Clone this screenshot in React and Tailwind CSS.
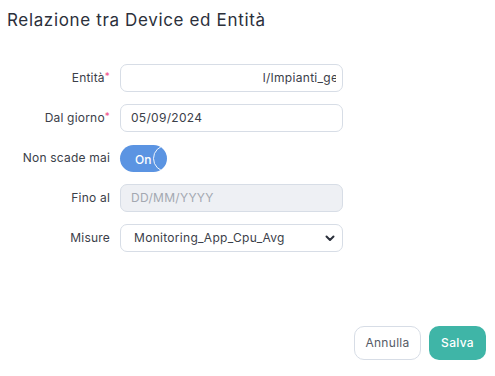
import React from "react";

function Label({ children, req }) {
  return (
    <div className="w-[111px] shrink-0 text-right text-[12px] text-[#3b4049] pr-[1px] tracking-[0.2px]">
      {children}
      {req && <span className="text-[#f0508a] text-[10px] align-top">*</span>}
    </div>
  );
}

export default function App() {
  return (
    <div
      className="w-[495px] h-[376px] bg-white relative flex flex-col"
      style={{ fontFamily: "Inter, 'Noto Sans', sans-serif" }}
    >
      <div className="pl-[7px] pt-[8px] text-[17px] text-[#2b303b] leading-[24px] tracking-[0.65px]">
        Relazione tra Device ed Entità
      </div>
      <div className="mt-[32px] flex flex-col gap-[12px] tracking-[0.3px]">
        <div className="flex items-center gap-[9px] h-[28px]">
          <Label req>Entità</Label>
          <div className="w-[223px] h-[28px] rounded-[7px] border border-[#d7dde6] flex items-center justify-end pr-[6px] overflow-hidden text-[12px] text-[#3b4049] whitespace-nowrap">
            <span className="overflow-hidden whitespace-nowrap flex justify-end">
              <span>l/Impianti_g</span>
              <span className="inline-block w-[5px] overflow-hidden">e</span>
            </span>
          </div>
        </div>
        <div className="flex items-center gap-[9px] h-[28px]">
          <Label req>Dal giorno</Label>
          <div className="w-[223px] h-[28px] rounded-[7px] border border-[#d7dde6] flex items-center pl-[10px] text-[12px] text-[#3b4049]">
            05/09/2024
          </div>
        </div>
        <div className="flex items-center gap-[9px] h-[28px]">
          <Label>Non scade mai</Label>
          <div className="w-[47px] h-[27px] rounded-full bg-[#5b94e2] relative overflow-hidden flex items-center">
            <span className="ml-[15px] mt-[4px] text-[12px] text-white font-medium tracking-normal">On</span>
            <div className="absolute left-[33px] top-[0px] w-[27px] h-[27px] rounded-full border border-white/90"></div>
          </div>
        </div>
        <div className="flex items-center gap-[9px] h-[28px]">
          <Label>Fino al</Label>
          <div className="w-[223px] h-[28px] rounded-[7px] border border-[#d7dde6] bg-[#eef0f4] flex items-center pl-[10px] text-[12px] text-[#a3a8b1]">
            DD/MM/YYYY
          </div>
        </div>
        <div className="flex items-center gap-[9px] h-[28px]">
          <Label>Misure</Label>
          <div className="w-[223px] h-[28px] rounded-[7px] border border-[#d7dde6] flex items-center pl-[13px] pr-[7px] text-[12px] text-[#3b4049] justify-between">
            <span>Monitoring_App_Cpu_Avg</span>
            <svg width="10" height="8" viewBox="0 0 10 8">
              <path d="M1.5 2.5 L5 6 L8.5 2.5" fill="none" stroke="#2b303b" strokeWidth="2" strokeLinecap="round" strokeLinejoin="round" />
            </svg>
          </div>
        </div>
      </div>
      <div className="mt-auto mb-[16px] flex justify-end gap-[8px] pr-[9px] tracking-[0.3px]">
        <button className="w-[67px] h-[34px] rounded-[10px] border border-[#d7dde6] text-[12px] text-[#555b66] bg-white">
          Annulla
        </button>
        <button className="w-[57px] h-[34px] rounded-[10px] bg-[#3fb5a7] text-[12px] text-white font-medium">
          Salva
        </button>
      </div>
    </div>
  );
}
